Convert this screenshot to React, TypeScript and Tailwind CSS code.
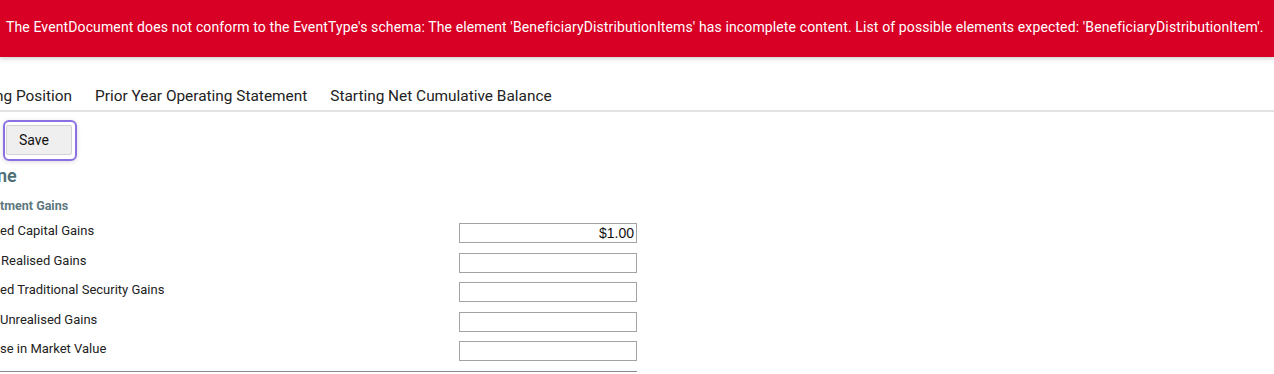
const tabs = ['ng Position', 'Prior Year Operating Statement', 'Starting Net Cumulative Balance'];

const rows = [
  { label: 'ed Capital Gains', value: '$1.00', pad: 'pl-0' },
  { label: 'Realised Gains', value: '', pad: 'pl-[1px]' },
  { label: 'ed Traditional Security Gains', value: '', pad: 'pl-0' },
  { label: 'Unrealised Gains', value: '', pad: 'pl-0' },
  { label: 'se in Market Value', value: '', pad: 'pl-0' },
];

export default function App() {
  return (
    <div className="w-[1274px] h-[374px] overflow-hidden bg-white font-['Roboto','Liberation_Sans',sans-serif] text-[#222]">
      <div className="h-[57px] bg-[#d80024] shadow-[0_2px_4px_rgba(0,0,0,.18)] flex items-center pl-[6px] pb-[3px] relative z-10">
        <span className="text-white text-[14px] tracking-[0.12px] whitespace-nowrap">
          The EventDocument does not conform to the EventType's schema: The element 'BeneficiaryDistributionItems' has incomplete
          content. List of possible elements expected: 'BeneficiaryDistributionItem'.
        </span>
      </div>

      <div className="flex pt-[30px] pb-[5px] border-b-2 border-[#e3e3e3]">
        {tabs.map((t, i) => (
          <div
            key={t}
            className={`text-[15.4px] leading-[18px] text-[#222] whitespace-nowrap ${i === 0 ? '-ml-[5px] pr-[11.5px]' : 'px-[11.5px]'}`}
          >
            {t}
          </div>
        ))}
      </div>

      <div className="pt-[8px] pl-[3px]">
        <div className="inline-flex rounded-[6px] border-2 border-[#8b70e3] pl-[1px] pr-[3px] pt-[3px] pb-[4px] shadow-[0_1px_4px_rgba(0,0,0,.15)]">
          <button className="w-[66px] h-[30px] bg-[#efefef] border border-[#d2d2d2] rounded-[2px] text-[14px] text-[#111] text-left pl-[12px]">
            Save
          </button>
        </div>
      </div>

      <div className="text-[18px] leading-[22px] font-semibold text-[#4d6e76] mt-[4px] -ml-[3px]">ne</div>
      <div className="text-[12.5px] leading-[15px] font-bold text-[#5d7880] mt-[11px] mb-[10px]">tment Gains</div>

      <div className="w-[637px]">
        {rows.map((r) => (
          <div key={r.label} className="flex items-start h-[29.5px]">
            <div className={`flex-1 text-[13px] leading-[16px] text-[#222] whitespace-nowrap ${r.pad}`}>{r.label}</div>
            <div className="w-[178px] h-[20px] border border-[#a3a3a3] bg-white text-right pr-[2px] text-[14px] leading-[18px] font-['Liberation_Sans',Arial,sans-serif] text-[#111]">
              {r.value}
            </div>
          </div>
        ))}
        <div className="border-t border-[#8a8a8a]" />
      </div>
    </div>
  );
}
